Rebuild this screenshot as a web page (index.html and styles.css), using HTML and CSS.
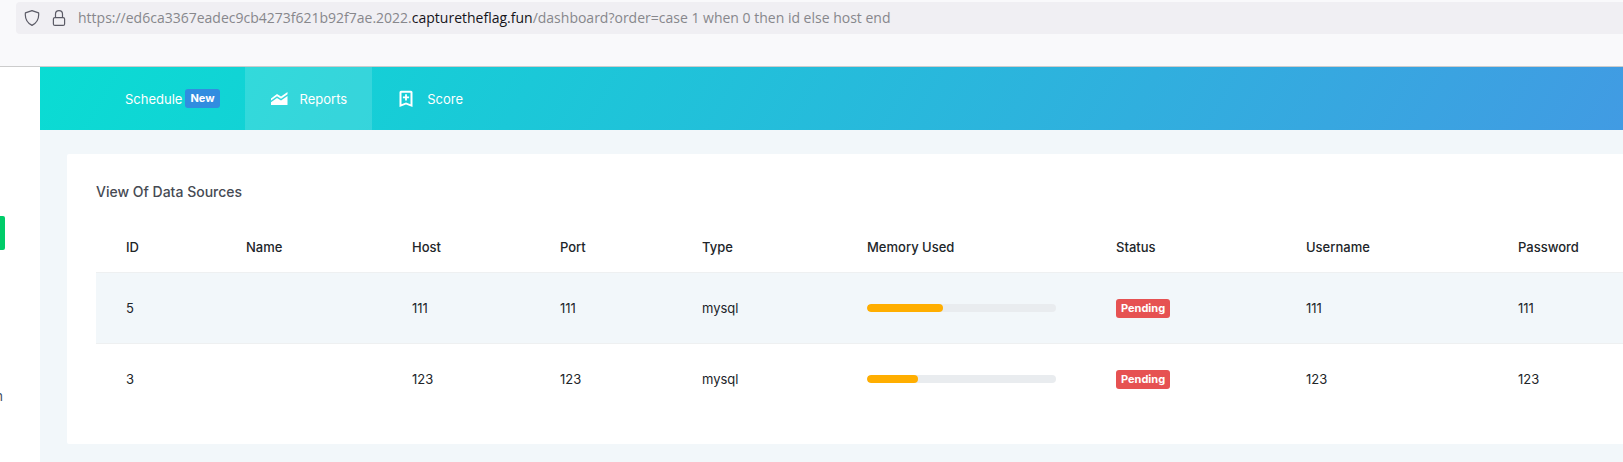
FILE: index.html
```
<!DOCTYPE html>
<html lang="en">
<head>
<meta charset="utf-8">
<title>Data Sources</title>
<link rel="stylesheet" href="styles.css">
</head>
<body>
<header class="toolbar">
  <div class="urlbar">
    <svg class="url-icon" viewBox="0 0 16 16" aria-hidden="true"><path d="M8 .6 14.600 2.900c.5 4.600-.9 9.400-6.600 12.500C2.300 12.300.900 7.500 1.400 2.900z"/></svg>
    <svg class="url-icon" viewBox="0 0 16 16" aria-hidden="true"><rect x="2.400" y="7.600" width="11.200" height="7.800" rx="1.500"/><path d="M4.500 7.500V4.100a3.500 3.500 0 0 1 7 0v3.400"/></svg>
    <div class="url" role="textbox" aria-label="Address">https://ed6ca3367eadec9cb4273f621b92f7ae.2022.<span class="domain">capturetheflag.fun</span>/dashboard?order=case 1 when 0 then id else host end</div>
  </div>
</header>
<div class="page">
  <aside class="sidebar">
    <button class="side-button" type="button" aria-label="Create"></button>
    <a class="side-link" href="#">n</a>
  </aside>
  <div class="content">
    <nav class="nav">
      <a class="nav-item" href="#">Schedule <span class="badge badge-new">New</span></a>
      <a class="nav-item active" href="#"><svg class="nav-icon" viewBox="0 0 18 18" aria-hidden="true"><path d="M1 8.500 7 4l4 2.500L17.500 2v2.300L11 8.800 7 6.300 1 10.500z"/><path d="M1 12.300 7 8l4 2.500 6.500-4.600V15H1z"/></svg>Reports</a>
      <a class="nav-item" href="#"><svg class="nav-icon" viewBox="0 0 18 18" aria-hidden="true"><path fill-rule="evenodd" d="M4 .8h10a1.500 1.500 0 0 1 1.500 1.500V17L9 14.500 2.500 17V2.300A1.500 1.500 0 0 1 4 .8zm.5 1.900v11.500L9 12.500l4.500 1.700V2.700z"/><path d="M8.100 4.300h1.800v2.200h2.200v1.800H9.900v2.200H8.100V8.300H5.900V6.500h2.200z"/></svg>Score</a>
    </nav>
    <main class="main">
      <section class="card">
        <h1 class="card-title">View Of Data Sources</h1>
        <table class="sources">
          <colgroup><col class="c-id"><col class="c-name"><col class="c-host"><col class="c-port"><col class="c-type"><col class="c-memory"><col class="c-status"><col class="c-user"><col class="c-pass"></colgroup>
          <thead>
            <tr><th>ID</th><th>Name</th><th>Host</th><th>Port</th><th>Type</th><th>Memory Used</th><th>Status</th><th>Username</th><th>Password</th></tr>
          </thead>
          <tbody>
            <tr><td>5</td><td></td><td>111</td><td>111</td><td>mysql</td><td><div class="progress"><div class="bar" style="width:40%"></div></div></td><td><span class="badge badge-pending">Pending</span></td><td>111</td><td>111</td></tr>
            <tr><td>3</td><td></td><td>123</td><td>123</td><td>mysql</td><td><div class="progress"><div class="bar" style="width:27%"></div></div></td><td><span class="badge badge-pending">Pending</span></td><td>123</td><td>123</td></tr>
          </tbody>
        </table>
      </section>
    </main>
  </div>
</div>
</body>
</html>
```
FILE: styles.css
```
* { box-sizing: border-box; }
body {
  margin: 0;
  min-height: 100vh;
  display: flex;
  flex-direction: column;
  font: 13px/20px Inter, sans-serif;
  color: #212529;
  background: #fff;
}
.toolbar {
  padding: 2px 0 32px 16px;
  background: #f9f9fb;
  border-bottom: 1px solid #ccc;
}
.urlbar {
  display: flex;
  align-items: center;
  gap: 11px;
  height: 32px;
  padding-left: 8px;
  background: #f0eff3;
  border-radius: 4px 0 0 4px;
}
.url-icon {
  flex: none;
  width: 16px;
  height: 16px;
  fill: none;
  stroke: #5b5b66;
  stroke-width: 1.2;
  stroke-linejoin: round;
}
.url {
  font: 14px/24px "Open Sans", sans-serif;
  color: #87878c;
  white-space: nowrap;
}
.domain { color: #15141a; }
.page { flex: 1; display: flex; }
.sidebar {
  flex: none;
  width: 40px;
  padding-top: 149px;
  display: flex;
  flex-direction: column;
  align-items: flex-start;
  gap: 136px;
}
.side-button {
  width: 5px;
  height: 34px;
  padding: 0;
  border: 0;
  border-radius: 0 2px 2px 0;
  background: #00cc69;
}
.side-link {
  display: flex;
  justify-content: flex-end;
  width: 3px;
  overflow: hidden;
  color: #3e4b5b;
  text-decoration: none;
}
.content {
  flex: 1;
  min-width: 0;
  display: flex;
  flex-direction: column;
  background: #f2f7fa;
}
.nav {
  display: flex;
  height: 63px;
  padding-left: 60px;
  background: linear-gradient(120deg, #0adcd3, #419be3);
}
.nav-item {
  display: flex;
  align-items: center;
  padding: 0 25px;
  color: #fff;
  text-decoration: none;
  white-space: nowrap;
}
.nav-item.active { background: rgba(255, 255, 255, 0.14); }
.nav-icon {
  width: 18px;
  height: 18px;
  margin-right: 12px;
  fill: #fff;
}
.badge {
  display: inline-block;
  padding: 0 5px;
  border-radius: 3px;
  font-size: 11px;
  line-height: 19px;
  font-weight: 700;
  color: #fff;
}
.badge-new { margin-left: 3px; background: #318de0; }
.badge-pending { background: #e65252; }
.main { padding: 24px 0 18px 27px; }
.card { padding: 24px 0 30px 29px; background: #fff; border-radius: 2px 0 0 2px; }
.card-title {
  margin: 0 0 16px;
  font-size: 14px;
  line-height: 28px;
  font-weight: 500;
  color: #464a53;
}
.sources {
  width: 100%;
  table-layout: fixed;
  border-collapse: collapse;
}
.c-id { width: 120px; }
.c-name { width: 166px; }
.c-host { width: 148px; }
.c-port { width: 142px; }
.c-type { width: 165px; }
.c-memory { width: 249px; }
.c-status { width: 190px; }
.c-user { width: 212px; }
.c-pass { width: 135px; }
.sources th {
  height: 50px;
  padding: 0 0 0 30px;
  text-align: left;
  font-weight: 500;
}
.sources td {
  height: 71px;
  padding: 0 30px;
  border-top: 1px solid #eef0f1;
}
.sources tbody tr:nth-child(odd) { background: #f2f7fa; }
.progress {
  height: 8px;
  border-radius: 4px;
  overflow: hidden;
  background: #e9ecef;
}
.bar { height: 100%; border-radius: 4px; background: #ffae00; }
```
